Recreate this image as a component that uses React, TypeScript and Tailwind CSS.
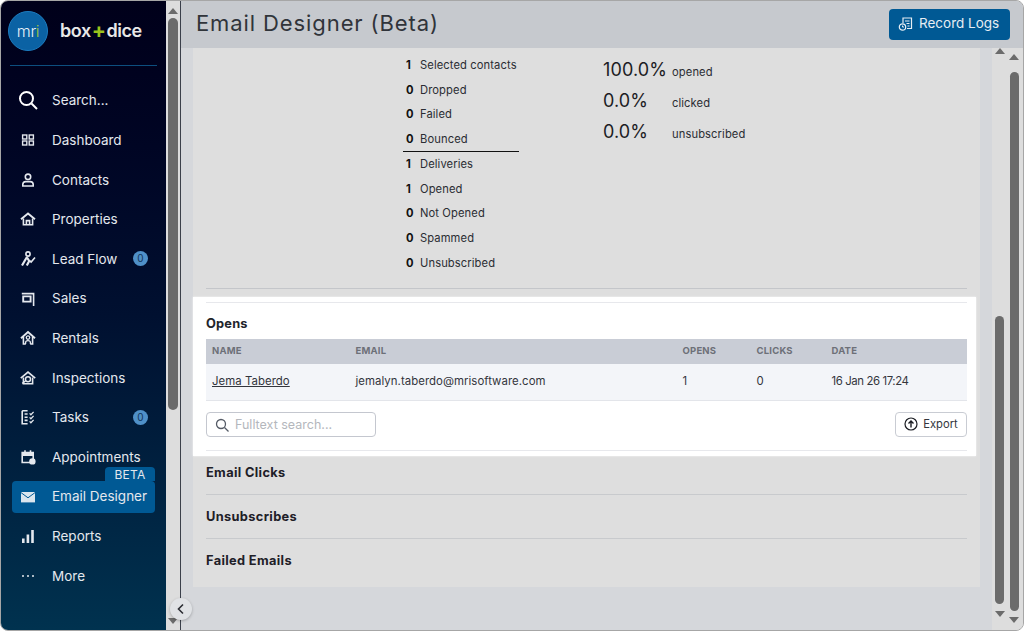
import React from "react";

const S = ({ children, className = "" }: { children: React.ReactNode; className?: string }) => (
  <svg viewBox="0 0 16 16" width="16" height="16" fill="none" stroke="currentColor" strokeWidth="1.6" className={className}>
    {children}
  </svg>
);

const icons: Record<string, React.ReactNode> = {
  dashboard: (
    <S>
      <rect x="2.6" y="3" width="4.2" height="4" strokeWidth="1.4" />
      <rect x="9.2" y="3" width="4.2" height="4" strokeWidth="1.4" />
      <rect x="2.6" y="9" width="4.2" height="4" strokeWidth="1.4" />
      <rect x="9.2" y="9" width="4.2" height="4" strokeWidth="1.4" />
    </S>
  ),
  contacts: (
    <S>
      <circle cx="8" cy="4.8" r="2.7" />
      <path d="M2.8 14v-1.4c0-2 1.6-3 3-3h4.4c1.4 0 3 1 3 3V14z" />
    </S>
  ),
  properties: (
    <S>
      <path d="M1 8.2 8 2.4l7 5.8" strokeWidth="1.9" />
      <path d="M3.4 7.5v6.3h9.2V7.5" />
      <path d="M6.4 13.8V9.6h3.2v4.2" />
    </S>
  ),
  lead: (
    <S>
      <circle cx="8" cy="3" r="2.1" />
      <path d="M7 6 4.6 10 2 14.5" strokeWidth="2.2" />
      <path d="M7 6.5 9.2 10l-2.4 4.5" strokeWidth="2.2" />
      <path d="m9.5 9.5 1.6 1.6L15 6.5" />
    </S>
  ),
  sales: (
    <S>
      <path d="M1.8 2.6H13.6V15" />
      <path d="M3.2 5.4h7.4v5.2H3.2z" strokeWidth="1.9" />
    </S>
  ),
  rentals: (
    <S>
      <path d="M1 8.2 8 2l7 6.2" strokeWidth="1.9" />
      <path d="M3.4 7v7h2.4M12.6 7v7h-2.4" />
      <circle cx="8" cy="7.6" r="1.7" strokeWidth="1.3" />
      <path d="M5.6 14v-1.4c0-1 1-2 2.4-2s2.4 1 2.4 2V14" strokeWidth="1.3" />
    </S>
  ),
  inspections: (
    <S>
      <path d="M.8 8.2 8 2l7.2 6.2" strokeWidth="1.7" />
      <path d="M3.4 7.5v6.3h9.2V7.5" />
      <circle cx="8" cy="9.2" r="2.5" strokeWidth="1.4" />
      <path d="m2.2 13.4 3.6-2.6" strokeWidth="1.4" />
    </S>
  ),
  tasks: (
    <S>
      <path d="M2.2 1.8v13h5.4" />
      <path d="M2.2 1.8h5.4M4.6 5h3M4.6 8.2h3M4.6 11.4h3" />
      <path d="m9.6 4.4 1.3 1.3 2.7-2.8M9.6 8.4l1.3 1.3 2.7-2.8M9.6 12.4l1.3 1.3 2.7-2.8" strokeWidth="1.3" />
    </S>
  ),
  appointments: (
    <S>
      <path d="M2.2 3.5h11v10h-11z" fill="none" />
      <path d="M2.2 3.5h11V7h-11z" fill="currentColor" stroke="none" />
      <path d="M5 1.2v3M10.5 1.2v3" />
      <circle cx="12.4" cy="12.4" r="3.2" fill="currentColor" stroke="none" />
    </S>
  ),
  email: (
    <S>
      <path d="M1 3h14v10.4H1z" fill="#dbe6ee" stroke="none" />
      <path d="m1 3.6 7 5.2 7-5.2" stroke="#005994" strokeWidth="1" />
    </S>
  ),
  reports: (
    <S>
      <path d="M2 10.4h2.6V15H2zM6.6 6.4h2.6V15H6.6zM11.2 2h2.6v13h-2.6z" fill="currentColor" stroke="none" />
    </S>
  ),
  more: (
    <S>
      <circle cx="3" cy="8" r="1" fill="currentColor" stroke="none" />
      <circle cx="8" cy="8" r="1" fill="currentColor" stroke="none" />
      <circle cx="13" cy="8" r="1" fill="currentColor" stroke="none" />
    </S>
  ),
};

const nav = [
  { label: "Dashboard", icon: "dashboard" },
  { label: "Contacts", icon: "contacts" },
  { label: "Properties", icon: "properties" },
  { label: "Lead Flow", icon: "lead", badge: true },
  { label: "Sales", icon: "sales" },
  { label: "Rentals", icon: "rentals" },
  { label: "Inspections", icon: "inspections" },
  { label: "Tasks", icon: "tasks", badge: true },
  { label: "Appointments", icon: "appointments" },
  { label: "Email Designer", icon: "email", active: true },
  { label: "Reports", icon: "reports" },
  { label: "More", icon: "more" },
];

const stats: [string, string][] = [
  ["1", "Selected contacts"],
  ["0", "Dropped"],
  ["0", "Failed"],
  ["0", "Bounced"],
  ["1", "Deliveries"],
  ["1", "Opened"],
  ["0", "Not Opened"],
  ["0", "Spammed"],
  ["0", "Unsubscribed"],
];

const pct: [string, string][] = [
  ["100.0%", "opened"],
  ["0.0%", "clicked"],
  ["0.0%", "unsubscribed"],
];

const Up = () => (
  <div className="w-0 h-0 shrink-0 border-l-[5px] border-r-[5px] border-b-[6px] border-l-transparent border-r-transparent border-b-[#6b6b6b]" />
);
const Down = () => (
  <div className="w-0 h-0 shrink-0 border-l-[5px] border-r-[5px] border-t-[6px] border-l-transparent border-r-transparent border-t-[#6b6b6b]" />
);

export default function App() {
  return (
    <div
      className="w-[1024px] h-[631px] box-border flex overflow-hidden rounded-lg border border-[#a6a6a6] bg-[#dddddd] relative text-[#2b2d33]"
      style={{ fontFamily: "Inter, 'Open Sans', sans-serif" }}
    >
      {/* Sidebar */}
      <aside className="w-[165px] shrink-0 flex flex-col bg-gradient-to-b from-[#00001a] via-[#001030] to-[#00324f] text-[#e4e8ee]">
        <div className="flex items-center h-[64px] pb-[5px] pl-[7px] mx-0">
          <div className="w-[40px] h-[40px] rounded-full bg-[#0b62a4] border border-[#1c7cc0] flex items-center justify-center text-[16px] font-light tracking-[-0.3px] text-[#e8f1f8]">
            mr<span className="text-[#a4c639]">i</span>
          </div>
          <div className="ml-[12px] text-[18px] font-semibold tracking-[-0.45px] text-[#e8e8e8] leading-none flex items-center">
            box<span className="text-[#9bc31c] font-bold text-[21px] mx-[1px] leading-none">+</span>dice
          </div>
        </div>
        <div className="h-px bg-[#0d4f7f] ml-[9px] mr-[9px]" />
        <div className="flex items-center h-[40px] mt-[14.4px] pl-[17px] text-[13.5px]">
          <svg width="20" height="20" viewBox="0 0 20 20" fill="none" stroke="currentColor" strokeWidth="2" className="text-white">
            <circle cx="8.5" cy="8.5" r="6.5" />
            <path d="m13.5 13.5 5.5 5.5" />
          </svg>
          <span className="ml-[14px] whitespace-nowrap">Search...</span>
        </div>
        <nav className="flex flex-col">
          {nav.map((n) => (
            <div
              key={n.label}
              className={
                n.active
                  ? "relative h-[32px] my-[3.8px] ml-[11px] mr-[11px] pl-[8px] rounded bg-[#005994] flex items-center text-[13.5px]"
                  : "relative h-[39.6px] pl-[19px] flex items-center text-[13.5px]"
              }
            >
              {n.active && (
                <div className="absolute right-0 -top-[14px] w-[50px] h-[14px] bg-[#005994] rounded-t text-[12px] leading-[15px] text-center tracking-[0.2px]">
                  BETA
                </div>
              )}
              <div className="w-[16px] h-[16px] shrink-0">{icons[n.icon]}</div>
              <span className="ml-[16px] whitespace-nowrap">{n.label}</span>
              {n.badge && (
                <div className="absolute left-[132px] w-[15px] h-[15px] rounded-full bg-[#4f90c8] text-[#12355a] text-[10px] leading-[15px] text-center">
                  0
                </div>
              )}
            </div>
          ))}
        </nav>
      </aside>

      {/* Sidebar scrollbar */}
      <div className="w-[14px] shrink-0 flex flex-col items-center bg-[#dddddd] pt-[7px]">
        <Up />
        <div className="w-[10px] h-[392px] mt-[4px] rounded-full bg-[#6b6b6b]" />
        <div className="mt-auto mb-[6px]">
          <Down />
        </div>
      </div>
      <div className="w-px shrink-0 bg-[#3a3f4a]" />

      {/* Main */}
      <main className="flex-1 min-w-0 flex flex-col">
        <header className="h-[47px] shrink-0 bg-[#c6c9ce] flex items-center justify-between pl-[15px] pr-[13px]">
          <h1 className="text-[22px] font-normal tracking-[0.9px] text-[#30343a] leading-none -mt-[3px]">
            Email Designer (Beta)
          </h1>
          <button className="w-[121px] h-[31px] rounded bg-[#005994] text-[#e6edf3] text-[13.5px] leading-none flex items-center pl-[9px] gap-[5px] -mt-[1px]">
            <svg width="16" height="16" viewBox="0 0 16 16" fill="none" stroke="currentColor" strokeWidth="1.2">
              <path d="M5 7V2h8.5v10.5H9" />
              <path d="M7 5h4.5M8.5 7.5h3M9.5 10h2" />
              <circle cx="4.5" cy="11" r="3.2" />
              <path d="M4.5 9.5V11h1.5" strokeWidth="1" />
            </svg>
            <span className="-mt-[1px]">Record Logs</span>
          </button>
        </header>

        <div className="flex-1 min-h-0 flex">
          {/* Content */}
          <div className="w-[811px] shrink-0 bg-[#d5d7db] pl-[12px]">
            <div className="w-[787px] h-[539px] bg-[#dedede] px-[13px] pt-[5px]">
              <div className="flex h-[222.75px]">
                <div className="w-[116px] ml-[197px]">
                  {stats.map(([n, l], i) => (
                    <div
                      key={l}
                      className={
                        "h-[24.75px] flex items-center text-[11.2px] box-border pl-[3px]" +
                        (i === 3 ? " border-b border-[#111111]" : "")
                      }
                    >
                      <span className="w-[14px] font-bold text-[#111111]">{n}</span>
                      <span className="tracking-[0.1px] whitespace-nowrap">{l}</span>
                    </div>
                  ))}
                </div>
                <div className="ml-[84px] pt-[4px]">
                  {pct.map(([p, l]) => (
                    <div key={l} className="h-[31px] flex items-center">
                      <span className="w-[69px] text-[18px] text-[#1c1c24] tracking-[0.1px] -mt-[6px]">{p}</span>
                      <span className="text-[11.2px] tracking-[0.1px]">{l}</span>
                    </div>
                  ))}
                </div>
              </div>
              <div className="h-px bg-[#c4c6ca] mt-[12.25px]" />

              {/* Opens */}
              <section className="relative z-10 -ml-[13px] -mr-[9px] pl-[13px] pr-[9px] mt-[8px] -mb-[5px] h-[159px] bg-white pt-[5px] shadow-[0_0_2px_rgba(255,255,255,0.8)]">
                <div className="h-px bg-[#e7e8ec]" />
                <h2 className="h-[36px] box-border pt-[6px] flex items-center text-[12.8px] font-bold text-[#22252c] tracking-[0.2px]">Opens</h2>
                <div className="grid grid-cols-[143.5px_327px_74px_75px_1fr] h-[25px] pb-[1px] box-border items-center bg-[#c9cdd6] text-[9.5px] font-bold text-[#6d7078] tracking-[0.2px]">
                  <div className="pl-[6px]">NAME</div>
                  <div className="pl-[6px]">EMAIL</div>
                  <div className="pl-[6px]">OPENS</div>
                  <div className="pl-[6px]">CLICKS</div>
                  <div className="pl-[6px]">DATE</div>
                </div>
                <div className="grid grid-cols-[143.5px_327px_74px_75px_1fr] h-[37px] items-center bg-[#f3f5f9] border-b border-[#e3e5ea] text-[11.4px] box-border tracking-[0.05px] text-[#33363d]">
                  <div className="pl-[6px] underline">Jema Taberdo</div>
                  <div className="pl-[6px]">jemalyn.taberdo@mrisoftware.com</div>
                  <div className="pl-[6px]">1</div>
                  <div className="pl-[6px]">0</div>
                  <div className="pl-[6px] tracking-[-0.4px]">16 Jan 26 17:24</div>
                </div>
                <div className="flex justify-between mt-[11px]">
                  <div className="w-[170px] h-[25px] box-border rounded border border-[#c4c7cf] flex items-center pl-[8px] gap-[6px] text-[12.5px] text-[#b4b7bd]">
                    <svg width="14" height="14" viewBox="0 0 14 14" fill="none" stroke="#555b66" strokeWidth="1.3">
                      <circle cx="6" cy="6" r="4.5" />
                      <path d="m9.5 9.5 4 4" />
                    </svg>
                    <span className="mt-[1px]">Fulltext search...</span>
                  </div>
                  <button className="w-[72px] h-[25px] box-border rounded border border-[#c9ccd3] flex items-center justify-center gap-[5px] text-[11.2px] text-[#33363d] pb-[1px]">
                    <svg width="14" height="14" viewBox="0 0 14 14" fill="none" stroke="#1a1c22" strokeWidth="1.2">
                      <circle cx="7" cy="7" r="6" />
                      <path d="M7 10.5V4M4.5 6.5 7 4l2.5 2.5" strokeWidth="1.4" />
                    </svg>
                    Export
                  </button>
                </div>
                <div className="h-px bg-[#e7e8ec] mt-[12.5px]" />
              </section>

              {["Email Clicks", "Unsubscribes", "Failed Emails"].map((t, i) => (
                <div
                  key={t}
                  className={
                    "h-[44px] box-border flex items-center text-[12.8px] font-bold text-[#1e2028] tracking-[0.35px]" +
                    (i < 2 ? " border-b border-[#c8cacd]" : "")
                  }
                >
                  {t}
                </div>
              ))}
            </div>
          </div>

          {/* Inner scrollbar */}
          <div className="w-[15px] shrink-0 flex flex-col items-center bg-[#dddddd] pb-[13px]">
            <Up />
            <div className="w-[9px] flex-1 mt-[262px] mb-[7px] rounded-full bg-[#6b6b6b]" />
            <Down />
          </div>
          {/* Outer scrollbar */}
          <div className="w-[16px] shrink-0 flex flex-col items-center bg-[#dddddd] pt-[6px] pb-[7px] pr-[2px]">
            <Up />
            <div className="w-[9px] flex-1 mt-[12px] mb-[6px] rounded-full bg-[#6b6b6b]" />
            <Down />
          </div>
        </div>
      </main>

      {/* Collapse */}
      <button className="absolute left-[169px] top-[597px] w-[22px] h-[22px] rounded-full bg-[#e0e2e5] shadow-[0_1px_3px_rgba(0,0,0,0.25)] flex items-center justify-center text-[#2b2d33]">
        <svg width="12" height="12" viewBox="0 0 12 12" fill="none" stroke="currentColor" strokeWidth="1.6">
          <path d="M8 1.5 3.5 6 8 10.5" />
        </svg>
      </button>
    </div>
  );
}
